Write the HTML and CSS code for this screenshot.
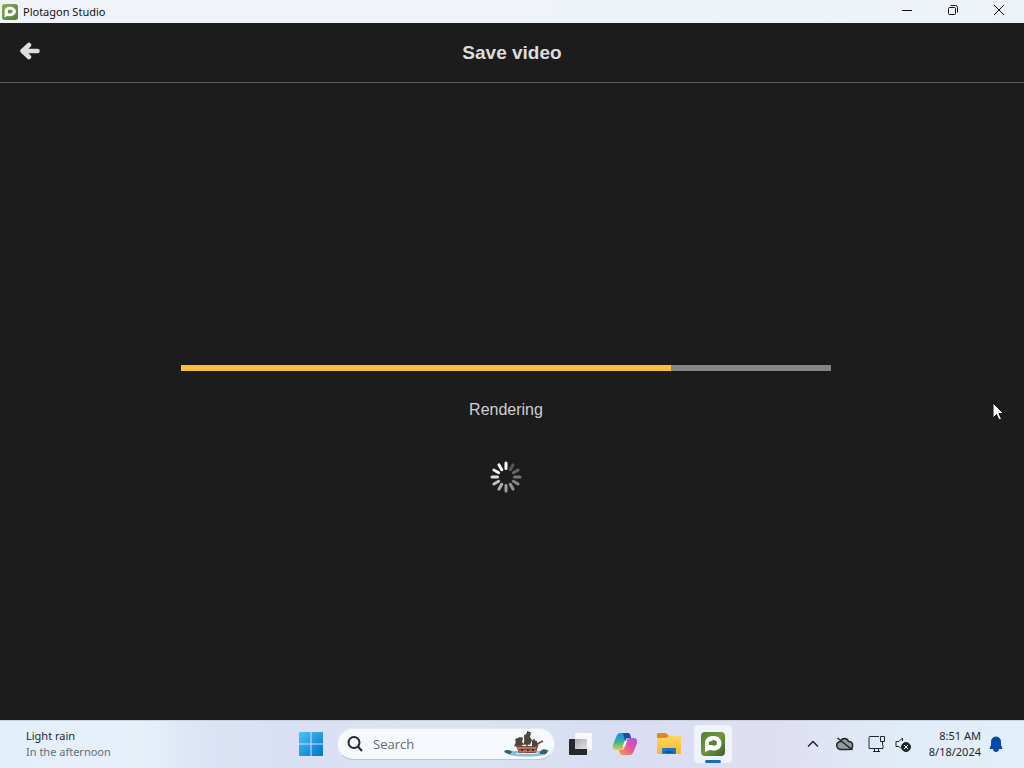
FILE: index.html
```html
<!DOCTYPE html>
<html lang="en">
<head>
<meta charset="utf-8">
<title>Plotagon Studio</title>
<link rel="stylesheet" href="styles.css">
</head>
<body>
<svg class="defs" aria-hidden="true">
  <defs>
    <linearGradient id="leaf" x1="0" y1="0" x2="1" y2="1"><stop offset="0" stop-color="#4f8536"/><stop offset=".5" stop-color="#71943f"/><stop offset="1" stop-color="#38612b"/></linearGradient>
    <linearGradient id="leaf-light" x1="0" y1="0" x2="1" y2="1"><stop offset="0" stop-color="#87ad5a"/><stop offset="1" stop-color="#557d38"/></linearGradient>
    <linearGradient id="win" x1="0" y1="0" x2="1" y2="1"><stop offset="0" stop-color="#4cc4f4"/><stop offset="1" stop-color="#0070cf"/></linearGradient>
    <linearGradient id="folder" x1="0" y1="0" x2="0" y2="1"><stop offset="0" stop-color="#ffd75e"/><stop offset="1" stop-color="#f9b52c"/></linearGradient>
    <linearGradient id="copA" x1="0" y1="0" x2="0" y2="1"><stop offset="0" stop-color="#1b8df0"/><stop offset=".5" stop-color="#31b59b"/><stop offset="1" stop-color="#e6cf35"/></linearGradient>
    <linearGradient id="copB" x1="1" y1="0" x2="0" y2="1"><stop offset="0" stop-color="#9a5bea"/><stop offset=".5" stop-color="#e8559c"/><stop offset="1" stop-color="#ff9c45"/></linearGradient>
    <linearGradient id="pane" x1="0" y1="0" x2="1" y2="1"><stop offset="0" stop-color="#aaa"/><stop offset="1" stop-color="#e2e2e2"/></linearGradient>
  </defs>
</svg>
<div class="window">
  <header class="titlebar">
    <svg class="app-icon" viewBox="0 0 24 24"><rect width="24" height="24" rx="4" fill="url(#leaf-light)"/><path fill-rule="evenodd" d="M4 20V10C4 6 8 4 12 4s9 3 9 7-4 7.500-9 7.500L8 18ZM9 9v5c4 1 7-1 7-3s-4-4-7-2Z" fill="#fff"/></svg>
    <h1 class="app-name">Plotagon Studio</h1>
    <div class="window-controls">
      <button class="window-button" aria-label="Minimize"><svg viewBox="0 0 12 12"><path d="M1 6.500h10"/></svg></button>
      <button class="window-button" aria-label="Restore"><svg viewBox="0 0 12 12"><rect x="1.500" y="3.500" width="7" height="7" rx="1"/><path d="M3.500 1.500h5a2 2 0 0 1 2 2v5"/></svg></button>
      <button class="window-button" aria-label="Close"><svg viewBox="0 0 12 12"><path d="M1 1l10 10M11 1L1 11"/></svg></button>
    </div>
  </header>
  <div class="page-header">
    <button class="back-button" aria-label="Back"><svg viewBox="0 0 20 18"><path d="M9 3 2.500 9 9 15M4 9h13.500" fill="none" stroke="#dedede" stroke-width="4.500" stroke-linecap="round" stroke-linejoin="round"/></svg></button>
    <h2 class="page-title">Save video</h2>
  </div>
  <main class="render-panel">
    <progress class="render-progress" id="render-progress" value="490" max="650"></progress>
    <label class="render-label" for="render-progress">Rendering</label>
    <svg class="spinner" viewBox="-16 -16 32 32" stroke-width="3" stroke-linecap="round" role="img" aria-label="Loading">
      <path d="M0-8.500V-14" stroke="#fff"/>
      <path d="M0-8.500V-14" stroke="#555" transform="rotate(30)"/>
      <path d="M0-8.500V-14" stroke="#666" transform="rotate(60)"/>
      <path d="M0-8.500V-14" stroke="#777" transform="rotate(90)"/>
      <path d="M0-8.500V-14" stroke="#858585" transform="rotate(120)"/>
      <path d="M0-8.500V-14" stroke="#929292" transform="rotate(150)"/>
      <path d="M0-8.500V-14" stroke="#a0a0a0" transform="rotate(180)"/>
      <path d="M0-8.500V-14" stroke="#b0b0b0" transform="rotate(210)"/>
      <path d="M0-8.500V-14" stroke="#c2c2c2" transform="rotate(240)"/>
      <path d="M0-8.500V-14" stroke="#dedede" transform="rotate(270)"/>
      <path d="M0-8.500V-14" stroke="#f0f0f0" transform="rotate(300)"/>
      <path d="M0-8.500V-14" stroke="#fafafa" transform="rotate(330)"/>
    </svg>
  </main>
  <footer class="taskbar">
    <div class="weather">
      <span class="weather-now">Light rain</span>
      <span class="weather-later">In the afternoon</span>
    </div>
    <nav class="dock" aria-label="Taskbar">
      <button class="dock-button" aria-label="Start"><svg class="icon-md" viewBox="0 0 24 24"><path fill="url(#win)" d="M0 1a1 1 0 0 1 1-1h10.500v11.500H0ZM12.500 0H23a1 1 0 0 1 1 1v10.500H12.500ZM0 12.500h11.500V24H1a1 1 0 0 1-1-1ZM12.500 12.500H24V23a1 1 0 0 1-1 1H12.500Z"/></svg></button>
      <div class="search">
        <svg class="search-icon" viewBox="0 0 16 16"><circle cx="7" cy="6.500" r="5.500"/><path d="M11 10.500l4 4.500"/></svg>
        <input class="search-input" type="text" placeholder="Search" aria-label="Search">
        <svg class="ship" viewBox="0 0 46 26">
          <path d="M1 20c4-2 6 0 8 0h28c3 0 4-2 8-1l-4 5c-12 2-25 2-35 0Z" fill="#83bee0"/>
          <path d="M0 20c3-2 6-1 8 1l-2 2c-3 0-5-1-6-3ZM36 21c2-4 6-3 8-1l-2 3h-6Z" fill="#395c70"/>
          <path d="M12 15h18l5-3-3 10H15Z" fill="#8b4937"/>
          <path d="M13 17h19M15 20h17" stroke="#dca18d" stroke-width="1"/>
          <path d="M23 2v14M16 6v10M30 8v8M33 13l6-3" stroke="#5c4938" stroke-width="1.500"/>
          <path d="M11 8c3-1 5-2 8-1l-1 4c2 1 1 3 0 4-3-1-6 1-8 0 2-3 2-5 1-7ZM20 4l7-2-1 4 2 3-2 5c-3-1-5 0-7 0 2-4 1-6 1-10ZM28 9l5 1v5l-5 1Z" fill="#49483d"/>
          <path d="M23 0l5 2-5 1Z" fill="#333"/>
          <path d="M17 18h2v2h-2ZM23 18h2v2h-2ZM28 18h2v2h-2Z" fill="#442b25"/>
          <path d="M12 23c8-2 15 1 22-1" stroke="#dff4ff" fill="none"/>
        </svg>
      </div>
      <button class="dock-button" aria-label="Task view"><svg class="icon-md" viewBox="0 0 24 24"><rect x="6" y="1" width="17" height="17" rx="1" fill="#f8f8fa"/><rect x="0" y="7" width="18" height="16" rx="1" fill="#26272a"/><path d="M6 7h12v10H6Z" fill="url(#pane)"/></svg></button>
      <button class="dock-button" aria-label="Copilot"><svg class="icon-md" viewBox="0 0 24 24"><path d="M7.500 1H15c2 0 2.500 3 3 5h-3c-1.500 0-2 1-2.500 3l-2 6c-.5 2-1.500 3-3 3H3.500C0 18-1 15 .5 11.500l3-7.500C4.500 2 5.500 1 7.500 1Z" fill="url(#copA)"/><path d="M16.500 23H9c-2 0-2.500-3-3-5h3c1.500 0 2-1 2.500-3l2-6c.5-2 1.500-3 3-3h4c3.500 0 4.500 3 3 6.500l-3 7.500c-1 2-2 3-4 3Z" fill="url(#copB)"/><path d="M10 1h5c2 0 2.500 3 3 5h-3c-2 0-2.500 1-3 3Z" fill="#164eae"/><path d="M11.500 9h2.500l-2 6h-2.500Z" fill="#edf0fb"/></svg></button>
      <button class="dock-button" aria-label="File Explorer"><svg class="icon-lg" viewBox="0 0 26 24"><path d="M1 2a1 1 0 0 1 1-1h8l3 3v5H1Z" fill="#d88e16"/><path d="M1 6h9l3-2h11a1 1 0 0 1 1 1v16a1 1 0 0 1-1 1H2a1 1 0 0 1-1-1Z" fill="url(#folder)"/><path d="M6 22v-5a1 1 0 0 1 1-1h12a1 1 0 0 1 1 1v5Z" fill="#1774cf"/><path d="M9 20h8" stroke="#07539c" stroke-width="2"/></svg></button>
      <button class="dock-button" aria-label="Plotagon Studio"><span class="active-tile"><svg class="icon-md" viewBox="0 0 24 24"><rect width="24" height="24" rx="4" fill="url(#leaf)"/><path d="M4 20V11C4 6.500 7.500 4 12.500 4S20.500 7 20.500 11.500 17 18.500 12.500 18.500L8.500 18 4 20Z" fill="#fff"/><path d="M8 13V9.500L11.500 9V7.500L15.500 9 16 12.500 13 14 11.500 13Z" fill="#548534"/></svg></span></button>
    </nav>
    <div class="tray">
      <button class="tray-button" aria-label="Show hidden icons"><svg viewBox="0 0 18 18"><path d="M4 11.500l5-5 5 5" stroke-width="1.500"/></svg></button>
      <button class="tray-button" aria-label="OneDrive"><svg viewBox="0 0 18 18"><path d="M5 14.500a4 4 0 0 1-.5-8C6 2.500 11 2.500 12.500 6.500c5.500 0 5.500 8 0 8Z" fill="#999" stroke-width="1.500"/><path d="M1.500 3l15 12" stroke-width="1.500"/></svg></button>
      <button class="tray-button" aria-label="Network"><svg viewBox="0 0 18 18"><path d="M11 1.500H2a1 1 0 0 0-1 1v11h14V10M5 16.500h7M6.500 13.500v3M10.500 13.500v3M12.500 1.500h4v5h-4ZM14.500 6.500V10"/></svg></button>
      <button class="tray-button tray-volume" aria-label="Volume muted"><svg viewBox="0 0 18 18"><path d="M8.500 6V3L5 6.500H2v5h3l2 2"/><circle cx="12" cy="12" r="4.500" fill="#23282e"/><path d="M10 10l4 4M14 10l-4 4" stroke="#fff"/></svg></button>
      <div class="clock"><time>8:51 AM</time><time>8/18/2024</time></div>
      <button class="bell" aria-label="Notifications"><svg viewBox="0 0 14 16"><path d="M7 1a4.500 4.500 0 0 0-4.500 4.500V9L1 12.500h12L11.500 9V5.500A4.500 4.500 0 0 0 7 1ZM4.500 13.500a2.500 2 0 0 0 5 0Z" fill="#0648a8" stroke="#0648a8"/></svg></button>
    </div>
  </footer>
  <svg class="cursor" viewBox="0 0 12 19" aria-hidden="true"><path d="M1 1v15l3.500-3.500L7 18l2.500-1-2.500-5.500h4.500Z" fill="#fff" stroke="#111" stroke-width="1"/></svg>
</div>
</body>
</html>
```
FILE: styles.css
```css
* { box-sizing: border-box; }
body { margin: 0; background: #1c1c1c; }
button { padding: 0; border: 0; background: none; }
svg { display: block; flex: none; }
.defs { position: absolute; width: 0; height: 0; }
.window {
  position: relative;
  display: flex;
  flex-direction: column;
  min-height: 100vh;
  font-family: "Noto Sans", "Open Sans", sans-serif;
}
.titlebar {
  display: flex;
  align-items: center;
  height: 23px;
  padding-left: 2px;
  background: linear-gradient(90deg, #f1f3fa, #edf2f9);
}
.app-icon { width: 16px; height: 16px; }
.app-name { margin: 0 0 0 5px; font-size: 11px; font-weight: 400; line-height: 16px; color: #111; }
.window-controls { display: flex; align-self: stretch; margin-left: auto; padding-right: 2px; }
.window-button { display: flex; align-items: center; justify-content: center; width: 46px; padding-bottom: 3px; }
.window-button svg { width: 12px; height: 12px; fill: none; stroke: #111; stroke-width: 1; }
.page-header {
  display: grid;
  grid-template-columns: 1fr auto 1fr;
  align-items: center;
  height: 60px;
  padding: 0 20px;
  border-bottom: 1px solid #595959;
}
.back-button { justify-self: start; padding-bottom: 4px; }
.back-button svg { width: 20px; height: 18px; }
.page-title { margin: 0; font: bold 19px/24px "Liberation Sans", Arial, sans-serif; color: #dcdcdc; }
.render-panel {
  flex: 1;
  display: flex;
  flex-direction: column;
  align-items: center;
  justify-content: center;
  padding: 54px 12px 0 0;
}
.render-progress {
  appearance: none;
  display: block;
  width: 650px;
  max-width: 90%;
  height: 6px;
  border: 0;
  background: #858585;
}
.render-progress::-webkit-progress-bar { background: #858585; }
.render-progress::-webkit-progress-value { background: #fcbf3c; }
.render-label { margin-top: 29px; font: 16px/20px "Liberation Sans", Arial, sans-serif; color: #d0d0d0; }
.spinner { width: 32px; height: 32px; margin-top: 41px; }
.taskbar {
  display: grid;
  grid-template-columns: 1fr auto 1fr;
  height: 48px;
  padding-bottom: 2px;
  border-top: 1px solid #c9d3df;
  background: linear-gradient(90deg, #e3effa 0%, #e6f0f9 14%, #dce3f5 20%, #dae0f4 30%, #d9e4f3 44%, #d8def2 60%, #dfdff2 76%, #e0ecf7 88%, #e2eff8 100%);
}
.weather { display: flex; flex-direction: column; justify-content: center; padding-left: 26px; font-size: 11px; line-height: 16px; }
.weather-now { color: #1e262e; }
.weather-later { color: #656e78; }
.dock { display: flex; align-items: center; }
.dock-button { display: flex; align-items: center; justify-content: center; width: 44px; height: 40px; }
.icon-md { width: 24px; height: 24px; }
.icon-lg { width: 26px; height: 24px; }
.search {
  display: flex;
  align-items: center;
  width: 218px;
  height: 32px;
  margin: 0 4px;
  padding: 0 4px 0 9px;
  border: 1px solid #e6eaf3;
  border-bottom-color: #bcc5d2;
  border-radius: 16px;
  background: #f6f9fd;
}
.search-icon { width: 16px; height: 16px; fill: none; stroke: #22272c; stroke-width: 2; }
.search-input { flex: 1; min-width: 0; margin-left: 8px; padding: 0 2px; border: 0; outline: 0; background: none; font: 13px/18px "Open Sans", "Noto Sans", sans-serif; color: #222; }
.search-input::placeholder { color: #626970; opacity: 1; }
.ship { width: 46px; height: 26px; }
.active-tile {
  position: relative;
  display: flex;
  align-items: center;
  justify-content: center;
  width: 38px;
  height: 38px;
  border-radius: 4px;
  background: #f0f3fb;
}
.active-tile::after { content: ""; position: absolute; bottom: 0; width: 16px; height: 3px; border-radius: 2px; background: #1769c2; }
.tray { display: flex; align-items: center; justify-content: flex-end; padding-right: 21px; }
.tray-button { display: flex; justify-content: center; width: 32px; }
.tray-volume { width: 20px; }
.tray-button svg { width: 18px; height: 18px; fill: none; stroke: #20262c; stroke-width: 1; }
.clock { display: flex; flex-direction: column; width: 68px; font-size: 11px; line-height: 16px; text-align: right; color: #1e262e; }
.bell { margin-left: 8px; }
.bell svg { width: 14px; height: 16px; }
.cursor { position: absolute; top: 402px; right: 20px; width: 12px; height: 19px; }
```
